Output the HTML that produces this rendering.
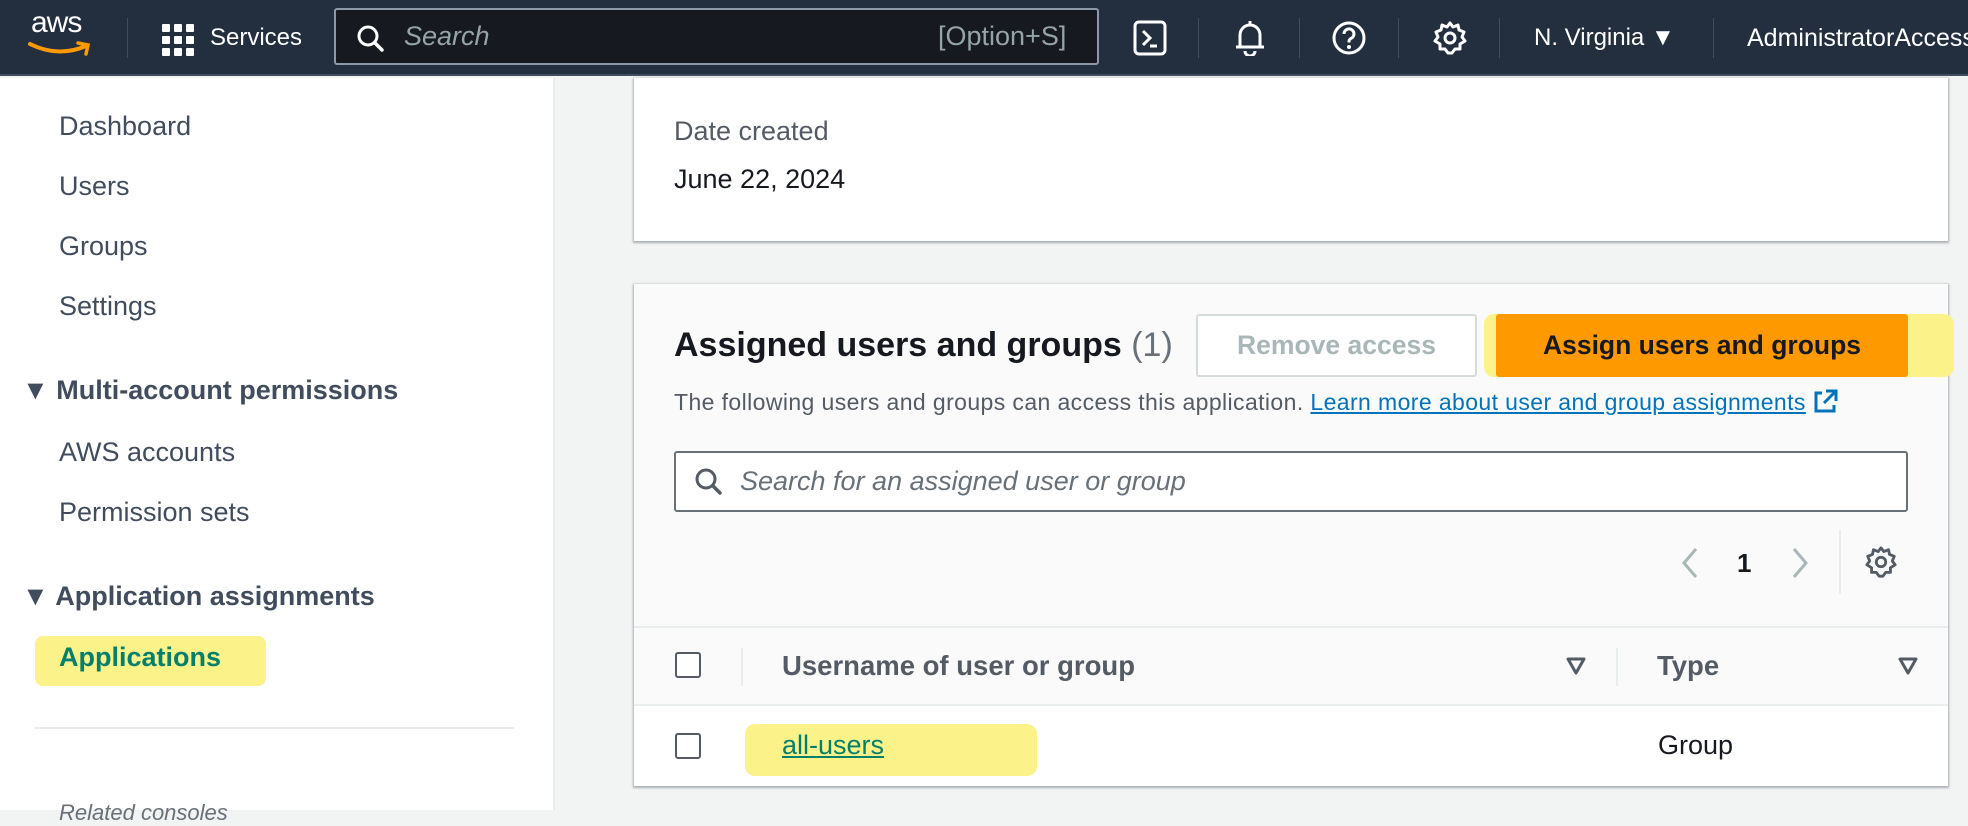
<!DOCTYPE html>
<html><head><meta charset="utf-8"><style>
*{box-sizing:border-box;margin:0;padding:0}
body{width:1968px;height:810px;overflow:hidden;background:#f2f3f3;font-family:"Liberation Sans",Arial,sans-serif;position:relative;color:#16191f}
.abs{position:absolute;white-space:nowrap}
#hdr{position:absolute;left:0;top:0;width:1968px;height:76px;background:#232f3e;border-bottom:2px solid #414d5c;z-index:5}
.sep{position:absolute;top:18px;width:1px;height:40px;background:#414d5c}
.hw{color:#fff;font-size:24px}
#side{position:absolute;left:0;top:78px;width:555px;height:732px;background:#fff;border-right:2px solid #e9ebed}
.nav{position:absolute;left:59px;font-size:27px;color:#414d5c}
.navh{position:absolute;left:22px;font-size:27px;font-weight:bold;color:#414d5c}
.card{position:absolute;background:#fff;box-shadow:0 1px 2px 1px rgba(0,28,36,.3)}
</style></head><body>
<div id="hdr">
  <div class="abs" style="left:31px;top:6px;color:#fff;font-size:30px;letter-spacing:-1px">aws</div>
  <svg class="abs" style="left:28px;top:40px" width="66" height="18" viewBox="0 0 66 18"><path d="M2 4 Q30 18 58 6" stroke="#ff9900" stroke-width="4" fill="none" stroke-linecap="round"/><path d="M50 3 L60 5 L58 14" stroke="#ff9900" stroke-width="3.5" fill="none" stroke-linecap="round"/></svg>
  <div class="sep" style="left:127px"></div>
  <svg class="abs" style="left:162px;top:24px" width="32" height="32" viewBox="0 0 32 32" fill="#fff"><rect x="0" y="0" width="8" height="8" rx="1"/><rect x="12" y="0" width="8" height="8" rx="1"/><rect x="24" y="0" width="8" height="8" rx="1"/><rect x="0" y="12" width="8" height="8" rx="1"/><rect x="12" y="12" width="8" height="8" rx="1"/><rect x="24" y="12" width="8" height="8" rx="1"/><rect x="0" y="24" width="8" height="8" rx="1"/><rect x="12" y="24" width="8" height="8" rx="1"/><rect x="24" y="24" width="8" height="8" rx="1"/></svg>
  <div class="abs hw" style="left:210px;top:24px">Services</div>
  <div class="abs" style="left:334px;top:8px;width:765px;height:57px;background:#16191f;border:2px solid #8d99a8;border-radius:3px"></div>
  <svg class="abs" style="left:356px;top:24px" width="30" height="30" viewBox="0 0 30 30"><circle cx="12" cy="12" r="9" stroke="#fff" stroke-width="3" fill="none"/><path d="M19 19 L26 26" stroke="#fff" stroke-width="3.5" stroke-linecap="round"/></svg>
  <div class="abs" style="left:404px;top:21px;color:#95a5a6;font-size:27px;font-style:italic">Search</div>
  <div class="abs" style="left:938px;top:21px;color:#95a5a6;font-size:27px">[Option+S]</div>
  <svg class="abs" style="left:1133px;top:20px" width="34" height="36" viewBox="0 0 34 36"><rect x="2" y="2" width="30" height="32" rx="4" stroke="#fff" stroke-width="3" fill="none"/><path d="M10 11 L17 18 L10 25 M17 26 H24" stroke="#fff" stroke-width="3" fill="none"/></svg>
  <div class="sep" style="left:1198px"></div>
  <svg class="abs" style="left:1233px;top:18px" width="34" height="38" viewBox="0 0 34 38"><path d="M17 3 V7 M7 28 V17 a10 10 0 0 1 20 0 V28 M3 29 H31 M12 33 a5 5 0 0 0 10 0" stroke="#fff" stroke-width="3" fill="none"/></svg>
  <div class="sep" style="left:1299px"></div>
  <svg class="abs" style="left:1331px;top:20px" width="36" height="36" viewBox="0 0 36 36"><circle cx="18" cy="18" r="15" stroke="#fff" stroke-width="3" fill="none"/><path d="M13 14 a5 5 0 1 1 7 4.5 c-2 1-2 2-2 4" stroke="#fff" stroke-width="3" fill="none"/><circle cx="18" cy="27" r="2" fill="#fff"/></svg>
  <div class="sep" style="left:1398px"></div>
  <svg class="abs" style="left:1432px;top:20px" width="36" height="36" viewBox="0 0 36 36"><circle cx="18" cy="18" r="5" stroke="#fff" stroke-width="3" fill="none"/><path d="M18 3 L21 7 L26 5 L27 10 L32 12 L30 17 L33 21 L28 24 L28 29 L23 29 L20 33 L16 33 L13 29 L8 29 L8 24 L3 21 L6 17 L4 12 L9 10 L10 5 L15 7 Z" stroke="#fff" stroke-width="3" fill="none" stroke-linejoin="round"/></svg>
  <div class="sep" style="left:1499px"></div>
  <div class="abs hw" style="left:1534px;top:24px">N. Virginia &#9660;</div>
  <div class="sep" style="left:1713px"></div>
  <div class="abs hw" style="left:1747px;top:24px;font-size:25px">AdministratorAccess</div>
</div>
<div id="side">
  <div class="nav" style="top:33px">Dashboard</div>
  <div class="nav" style="top:93px">Users</div>
  <div class="nav" style="top:153px">Groups</div>
  <div class="nav" style="top:213px">Settings</div>
  <div class="navh" style="top:297px">▼ Multi-account permissions</div>
  <div class="nav" style="top:359px">AWS accounts</div>
  <div class="nav" style="top:419px">Permission sets</div>
  <div class="navh" style="top:503px">▼ Application assignments</div>
  <div class="abs" style="left:35px;top:558px;width:231px;height:50px;background:#fbf28a;border-radius:8px"></div>
  <div class="nav" style="top:564px;font-weight:bold;color:#037f6c">Applications</div>
  <div class="abs" style="left:34px;top:649px;width:480px;height:2px;background:#e9ebed"></div>
  <div class="nav" style="top:722px;font-size:22px;color:#687078;font-style:italic">Related consoles</div>
</div>
<div class="card" style="left:634px;top:78px;width:1314px;height:163px">
  <div class="abs" style="left:40px;top:38px;font-size:27px;color:#545b64">Date created</div>
  <div class="abs" style="left:40px;top:86px;font-size:27px">June 22, 2024</div>
</div>
<div class="card" style="left:634px;top:284px;width:1314px;height:502px;background:#fafafa">
  <div class="abs" style="left:40px;top:42px;font-size:34px;font-weight:bold">Assigned users and groups <span style="font-weight:normal;color:#687078">(1)</span></div>
  <div class="abs" style="left:562px;top:30px;width:281px;height:63px;background:#fff;border:2px solid #d5dbdb;border-radius:3px;color:#aab7b8;font-size:26.5px;font-weight:bold;text-align:center;line-height:59px">Remove access</div>
  <div class="abs" style="left:850px;top:30px;width:470px;height:63px;background:#fbf28a;border-radius:10px"></div>
  <div class="abs" style="left:862px;top:30px;width:412px;height:63px;background:#ff9900;border-radius:3px;color:#16191f;font-size:26.5px;font-weight:bold;text-align:center;line-height:63px">Assign users and groups</div>
  <div class="abs" style="left:40px;top:104px;font-size:23px;letter-spacing:0.4px;color:#545b64">The following users and groups can access this application. <span style="color:#0073bb;text-decoration:underline">Learn more about user and group assignments</span> <svg width="26" height="26" viewBox="0 0 26 26" style="vertical-align:-4px"><path d="M13 3 H23 V13 M23 3 L11 15 M9 5 H3 V23 H21 V17" stroke="#0073bb" stroke-width="3" fill="none"/></svg></div>
  <div class="abs" style="left:40px;top:167px;width:1234px;height:61px;background:#fff;border:2px solid #687078;border-radius:3px"></div>
  <svg class="abs" style="left:60px;top:183px" width="30" height="30" viewBox="0 0 30 30"><circle cx="12" cy="12" r="9" stroke="#545b64" stroke-width="3" fill="none"/><path d="M19 19 L26 26" stroke="#545b64" stroke-width="3.5" stroke-linecap="round"/></svg>
  <div class="abs" style="left:106px;top:182px;font-size:27px;font-style:italic;color:#687078">Search for an assigned user or group</div>
  <svg class="abs" style="left:1046px;top:262px" width="20" height="34" viewBox="0 0 20 34"><path d="M16 3 L4 17 L16 31" stroke="#aab7b8" stroke-width="3" fill="none"/></svg>
  <div class="abs" style="left:1103px;top:264px;font-size:26px;font-weight:bold">1</div>
  <svg class="abs" style="left:1156px;top:262px" width="20" height="34" viewBox="0 0 20 34"><path d="M4 3 L16 17 L4 31" stroke="#aab7b8" stroke-width="3" fill="none"/></svg>
  <div class="abs" style="left:1205px;top:246px;width:2px;height:64px;background:#e9ebed"></div>
  <svg class="abs" style="left:1230px;top:261px" width="34" height="34" viewBox="0 0 36 36"><circle cx="18" cy="18" r="5" stroke="#545b64" stroke-width="3" fill="none"/><path d="M18 3 L21 7 L26 5 L27 10 L32 12 L30 17 L33 21 L28 24 L28 29 L23 29 L20 33 L16 33 L13 29 L8 29 L8 24 L3 21 L6 17 L4 12 L9 10 L10 5 L15 7 Z" stroke="#545b64" stroke-width="3" fill="none" stroke-linejoin="round"/></svg>
  <div class="abs" style="left:0;top:342px;width:1314px;height:80px;background:#fafafa;border-top:2px solid #eaeded;border-bottom:2px solid #eaeded"></div>
  <div class="abs" style="left:41px;top:368px;width:26px;height:26px;border:2px solid #545b64;border-radius:3px;background:#fff"></div>
  <div class="abs" style="left:107px;top:364px;width:2px;height:38px;background:#eaeded"></div>
  <div class="abs" style="left:148px;top:366px;font-size:27.5px;font-weight:bold;color:#545b64">Username of user or group</div>
  <svg class="abs" style="left:932px;top:373px" width="20" height="18" viewBox="0 0 20 18"><path d="M2 2 H18 L10 16 Z" stroke="#545b64" stroke-width="3" fill="none" stroke-linejoin="round"/></svg>
  <div class="abs" style="left:982px;top:364px;width:2px;height:38px;background:#eaeded"></div>
  <div class="abs" style="left:1023px;top:366px;font-size:27.5px;font-weight:bold;color:#545b64">Type</div>
  <svg class="abs" style="left:1264px;top:373px" width="20" height="18" viewBox="0 0 20 18"><path d="M2 2 H18 L10 16 Z" stroke="#545b64" stroke-width="3" fill="none" stroke-linejoin="round"/></svg>
  <div class="abs" style="left:0;top:422px;width:1314px;height:80px;background:#fff"></div>
  <div class="abs" style="left:41px;top:449px;width:26px;height:26px;border:2px solid #545b64;border-radius:3px;background:#fff"></div>
  <div class="abs" style="left:111px;top:440px;width:292px;height:52px;background:#fbf28a;border-radius:10px"></div>
  <div class="abs" style="left:148px;top:446px;font-size:27px;color:#037f6c;text-decoration:underline">all-users</div>
  <div class="abs" style="left:1024px;top:446px;font-size:27px">Group</div>
</div>
</body></html>
